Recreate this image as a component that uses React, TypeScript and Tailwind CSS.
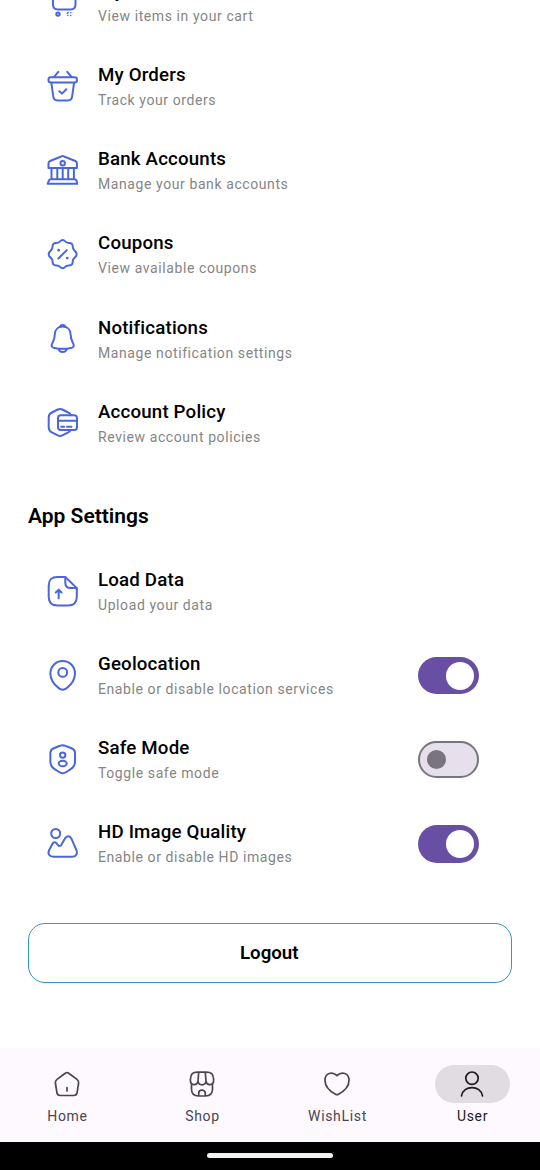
import type { ReactNode } from "react";

type Item = { title: string; subtitle: string; icon: ReactNode; on?: boolean };

function LineIcon({ children }: { children: ReactNode }) {
  return (
    <svg
      viewBox="-0.5 -0.5 32 32"
      className="h-8 w-8 shrink-0"
      fill="none"
      stroke="#4a66dc"
      strokeWidth="2"
      strokeLinecap="round"
      strokeLinejoin="round"
    >
      {children}
    </svg>
  );
}

const cart = (
  <LineIcon>
    <path d="M6.500 6v12c0 3.500 1.500 4.900 5 4.900h12.500c3.500 0 5-1.400 5-4.900V6z" />
    <circle cx="11.500" cy="27.600" r="1.700" />
    <path d="M20.800 26.800l.8-.8M24.300 26.200h.1M21.300 29h.1M24.100 29h.1" strokeWidth="1.500" />
  </LineIcon>
);
const basket = (
  <LineIcon>
    <path d="M11.800 1.300 7.600 6.300M20.800 1.300 25 6.300" />
    <rect x="2" y="6.700" width="28.400" height="5.400" rx="2.300" />
    <path d="M4.800 12.200 6.800 26.200C7.200 28.800 8.600 30 11 30h10.400c2.400 0 3.800-1.200 4.200-3.800l2-14M12.800 20.700l2.700 2.400 4.300-4.400" />
  </LineIcon>
);
const bank = (
  <LineIcon>
    <path d="M16.200 1.600c.8 0 1 .2 2 .6l10.600 4.300c1.200.5 1.600 1.100 1.600 2.200v4.700H2V8.700c0-1.100.4-1.700 1.600-2.200l10.600-4.300c1-.4 1.200-.6 2-.6z" />
    <circle cx="16.200" cy="8.700" r="2.200" />
    <path d="M5 13.400v11.300M10.800 13.400v11.300M16.200 13.400v11.300M21.700 13.400v11.300M27.400 13.400v11.300M4.200 24.700h24c1 0 1.200.2 1.500 1l1.400 3.600H1.100l1.500-3.600c.3-.8.6-1 1.600-1z" />
  </LineIcon>
);
const coupon = (
  <LineIcon>
    <path d="M13.600 2.900q2.500-2.700 5.100 0c1.200 1.300 2 1.600 3.700 1.500q3.800-.2 3.800 3.700c0 1.700.3 2.300 1.600 3.600q4.700 4 0 7.900c-1.300 1.200-1.600 1.900-1.600 3.600q0 3.900-3.800 3.700c-1.700-.1-2.500.2-3.700 1.500q-2.500 2.700-5.100 0c-1.200-1.300-2-1.600-3.700-1.500q-3.800.2-3.800-3.700c0-1.700-.3-2.400-1.600-3.600q-4.700-3.900 0-7.900c1.300-1.300 1.600-1.900 1.600-3.600q0-3.900 3.800-3.700c1.700.1 2.500-.2 3.700-1.500z" />
    <path d="M11.900 20l8.400-8.400" />
    <path d="M12.100 11.700h.1M20.700 19.500h.1" strokeWidth="2.700" />
  </LineIcon>
);
const bell = (
  <LineIcon>
    <path d="M16.200 3c-4.600 0-7.600 3.200-7.800 7.300-.2 4.300-.5 5.500-2.200 8.600-1.900 3.400-1.200 5 1.600 5.600 5.400 1.100 11.400 1.100 16.800 0 2.800-.6 3.500-2.200 1.600-5.600-1.700-3.100-2-4.300-2.200-8.600C23.800 6.200 20.800 3 16.200 3z" />
    <path d="M13.600 3.200c.6-2.300 4.600-2.300 5.200 0M12.200 25.400c.8 4.200 7.200 4.200 8 0" />
  </LineIcon>
);
const policy = (
  <LineIcon>
    <path d="M24.400 7.700c-.3-1.500-.9-2-2.600-2.700l-6-3c-1.700-.8-2.800-.8-4.500 0l-6 3C2.700 6.200 2.200 7.200 2.200 10v9.800c0 2.800.5 3.800 3.100 5.100l6 3c1.700.8 2.800.8 4.500 0l6-3c1.400-.7 2-1.200 2.300-2.500" />
    <rect x="11.500" y="7.800" width="19" height="14.800" rx="2.800" />
    <path d="M11.500 13.300h19M14.700 19.200h3M20.500 19.200h4.500" />
  </LineIcon>
);
const upload = (
  <LineIcon>
    <path d="M18.800 1.500H11C4.800 1.500 2.200 4 2.200 10.200v11C2.200 27.400 4.800 30 11 30h10.500c6.200 0 8.800-2.600 8.800-8.800v-8.600z" />
    <path d="M18.800 1.700v5.500c0 3.900 1.600 5.400 5.500 5.400h5.800M12.200 22.800v-8.500M9.300 17l2.900-2.900 2.900 2.900" />
  </LineIcon>
);
const pin = (
  <LineIcon>
    <path d="M16.200 1.500C9 1.500 3.900 7.200 3.900 13.900c0 5.100 3.300 10.700 8.300 14.700 2.800 2.200 5.200 2.200 8 0 5-4 8.300-9.600 8.300-14.700C28.500 7.200 23.400 1.500 16.200 1.500z" />
    <circle cx="16.200" cy="12.900" r="4.400" />
  </LineIcon>
);
const shield = (
  <LineIcon>
    <path d="M13.500 2.300c1.900-.8 3.500-.8 5.400 0l6.300 2.500c2.500 1 3.300 2.100 3.300 4.800v8.300c0 3.600-1.200 5.800-4.300 7.800l-4.300 2.800c-2.600 1.700-4.800 1.700-7.400 0l-4.300-2.800c-3.100-2-4.300-4.200-4.300-7.800V9.600c0-2.700.8-3.800 3.300-4.800z" />
    <circle cx="16.200" cy="11.600" r="2.700" />
    <ellipse cx="16.200" cy="20" rx="4" ry="2.800" />
  </LineIcon>
);
const image = (
  <LineIcon>
    <circle cx="9.200" cy="6" r="4.500" />
    <path d="M2.700 22.500 6 16.300c1.100-2.100 3.100-2.100 4.300-.2l.8 1.200c1.100 1.700 3 1.600 3.900-.2l3.600-6.300c1.800-2.900 4.800-2.700 6.300.3l4.900 11.200c1.600 3.900-.2 7-4.300 7H7.200c-4.600 0-6.300-3.100-4.500-6.800z" />
  </LineIcon>
);

const account: Item[] = [
  { title: "My Cart", subtitle: "View items in your cart", icon: cart },
  { title: "My Orders", subtitle: "Track your orders", icon: basket },
  { title: "Bank Accounts", subtitle: "Manage your bank accounts", icon: bank },
  { title: "Coupons", subtitle: "View available coupons", icon: coupon },
  { title: "Notifications", subtitle: "Manage notification settings", icon: bell },
  { title: "Account Policy", subtitle: "Review account policies", icon: policy },
];

const settings: Item[] = [
  { title: "Load Data", subtitle: "Upload your data", icon: upload },
  { title: "Geolocation", subtitle: "Enable or disable location services", icon: pin, on: true },
  { title: "Safe Mode", subtitle: "Toggle safe mode", icon: shield, on: false },
  { title: "HD Image Quality", subtitle: "Enable or disable HD images", icon: image, on: true },
];

function Toggle({ on }: { on: boolean }) {
  return on ? (
    <button role="switch" aria-checked="true" className="mt-px flex h-[37.500px] w-[61px] items-center justify-end rounded-full bg-[#684fa3] pr-[5px]">
      <span className="size-[28px] rounded-full bg-white" />
    </button>
  ) : (
    <button role="switch" aria-checked="false" className="mt-px flex h-[37.500px] w-[61px] items-center rounded-full border-2 border-[#79747e] bg-[#e7e0ec] pl-[7px]">
      <span className="size-[19px] rounded-full bg-[#79747e]" />
    </button>
  );
}

function Row({ item }: { item: Item }) {
  return (
    <li className="flex h-[84.200px] items-center pr-[61px] pl-[46px]">
      {item.icon}
      <div className="ml-5 flex-1 whitespace-nowrap">
        <div className="text-[18.700px] leading-[28px] font-medium tracking-[0.180px] text-black">{item.title}</div>
        <div className="text-[14px] leading-[22px] tracking-[0.590px] text-[#858585]">{item.subtitle}</div>
      </div>
      {item.on !== undefined && <Toggle on={item.on} />}
    </li>
  );
}

const tabs = [
  {
    label: "Home",
    icon: (
      <path d="M12.300 3.200c1-.8 2.400-.8 3.400 0l8.300 6.200c1.400 1 1.800 1.900 1.600 3.600l-1.500 9.700c-.3 2-1.300 2.800-3.300 2.800H7.200c-2 0-3-.8-3.300-2.800L2.400 13c-.2-1.700.2-2.600 1.600-3.600zM14 17.600v3.400" />
    ),
  },
  {
    label: "Shop",
    icon: (
      <path d="M9.700 2.200h8.600c5 0 7 1.500 7.300 7v1.300c0 5-6.900 5.700-7.600.7-.5 4.800-7.500 4.800-8 0-.7 5-7.600 4.300-7.600-.7V9.200c.3-5.500 2.300-7 7.300-7zM10.700 2.300 10 11.200M17.300 2.300l.7 8.900M3.500 14.500V19c0 5 2 7 7 7h7c5 0 7-2 7-7v-4.500M10.700 25.800v-2.500c0-4.300 6.600-4.300 6.600 0v2.500" />
    ),
  },
  {
    label: "WishList",
    icon: (
      <path d="M12.500 24.200C6.500 21.100 2 16 2 10.300 2 2.800 9.300 1.200 14 5.500c4.700-4.300 12-2.700 12 4.800 0 5.700-4.500 10.800-10.500 13.900-1.100.6-1.900.6-3 0z" />
    ),
  },
  {
    label: "User",
    icon: (
      <>
        <circle cx="14" cy="8.200" r="6.200" />
        <path d="M3.500 25.800C5.200 14.800 22.800 14.800 24.500 25.800" />
      </>
    ),
  },
];

export default function App() {
  return (
    <div className="flex h-[1170px] w-[540px] flex-col overflow-hidden bg-white font-['Roboto',sans-serif]">
      <main className="min-h-0 flex-1 overflow-hidden">
        <ul className="-mt-[40.200px]">
          {account.map((item) => (
            <Row key={item.title} item={item} />
          ))}
        </ul>
        <h2 className="mt-[35.400px] pl-7 text-[21px] leading-[32px] font-semibold text-black">App Settings</h2>
        <ul className="mt-[16.400px]">
          {settings.map((item) => (
            <Row key={item.title} item={item} />
          ))}
        </ul>
        <button className="mx-7 mt-[37.400px] flex h-[60px] w-[484px] items-center justify-center rounded-[17px] border-[1.200px] border-[#3593cc] pr-[1.500px] text-[18.700px] font-semibold text-black">
          Logout
        </button>
      </main>
      <nav className="grid h-[94px] shrink-0 grid-cols-4 bg-[#fef9ff] pt-[17px]">
        {tabs.map(({ label, icon }) => {
          const active = label === "User";
          return (
            <div key={label} className={active ? "flex flex-col items-center text-[#1d1b20]" : "flex flex-col items-center text-[#49454f]"}>
              <div className={active ? "flex h-[37.500px] w-[75px] items-center justify-center rounded-full bg-[#e1dce1] pr-px" : "flex h-[37.500px] w-[75px] items-center justify-center pr-px"}>
                <svg viewBox="0 0 28 28" className="size-7" fill="none" stroke="currentColor" strokeWidth="1.700" strokeLinecap="round" strokeLinejoin="round">
                  {icon}
                </svg>
              </div>
              <span className="mt-[4.500px] text-[14px] leading-[19px] tracking-[0.670px]">{label}</span>
            </div>
          );
        })}
      </nav>
      <footer className="flex h-7 shrink-0 items-center justify-center bg-black pb-px">
        <span className="h-[5px] w-[126px] rounded-full bg-[#f1f1f1]" />
      </footer>
    </div>
  );
}
